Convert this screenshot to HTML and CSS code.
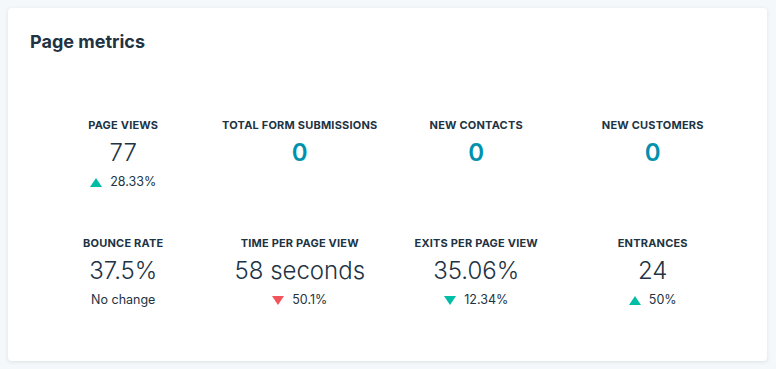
FILE: index.html
```html
<!DOCTYPE html>
<html lang="en">
<head>
<meta charset="utf-8">
<title>Page metrics</title>
<link rel="stylesheet" href="styles.css">
</head>
<body>
<section class="card">
  <h2 class="card-title">Page metrics</h2>
  <div class="metrics">
    <div class="metric">
      <div class="label">Page views</div>
      <div class="value">77</div>
      <div class="change"><span class="tri up"></span>28.33%</div>
    </div>
    <div class="metric">
      <div class="label">Total form submissions</div>
      <div class="value zero">0</div>
    </div>
    <div class="metric">
      <div class="label">New contacts</div>
      <div class="value zero">0</div>
    </div>
    <div class="metric">
      <div class="label">New customers</div>
      <div class="value zero">0</div>
    </div>
    <div class="metric">
      <div class="label">Bounce rate</div>
      <div class="value">37.5%</div>
      <div class="change">No change</div>
    </div>
    <div class="metric">
      <div class="label">Time per page view</div>
      <div class="value">58 seconds</div>
      <div class="change"><span class="tri down bad"></span>50.1%</div>
    </div>
    <div class="metric">
      <div class="label">Exits per page view</div>
      <div class="value">35.06%</div>
      <div class="change"><span class="tri down"></span>12.34%</div>
    </div>
    <div class="metric">
      <div class="label">Entrances</div>
      <div class="value">24</div>
      <div class="change"><span class="tri up"></span>50%</div>
    </div>
  </div>
</section>
</body>
</html>
```
FILE: styles.css
```css
html, body {
  margin: 0;
  padding: 0;
  background: #f5f8fa;
}
body {
  padding: 8px 9px 8px 8px;
  font-family: Inter, "Noto Sans", sans-serif;
  color: #213343;
}
.card {
  background: #fff;
  border-radius: 4px;
  box-shadow: 0 1px 4px rgba(45, 62, 80, 0.12);
  height: 353px;
  box-sizing: border-box;
  padding: 22px 26px 0 22px;
}
.card-title {
  margin: 0;
  font-size: 18px;
  line-height: 24px;
  font-weight: 700;
}
.metrics {
  display: grid;
  grid-template-columns: repeat(4, 1fr);
  row-gap: 34px;
  padding: 64px 0 0 5px;
}
.metric {
  display: flex;
  flex-direction: column;
  align-items: center;
  min-height: 84px;
}
.label {
  font-size: 11px;
  line-height: 14px;
  font-weight: 700;
  text-transform: uppercase;
  letter-spacing: 0.2px;
}
.value {
  font-size: 24px;
  line-height: 30px;
  font-weight: 300;
  margin-top: 6px;
}
.value.zero {
  color: #0091ae;
  font-weight: 600;
}
.change {
  font-size: 12.5px;
  line-height: 18px;
  margin-top: 5px;
  display: flex;
  align-items: center;
}
.tri {
  width: 0;
  height: 0;
  border-left: 6px solid transparent;
  border-right: 6px solid transparent;
  margin-right: 8px;
}
.tri.up {
  border-bottom: 9px solid #00bda5;
}
.tri.down {
  border-top: 9px solid #00bda5;
}
.tri.down.bad {
  border-top-color: #f2545b;
}
```
